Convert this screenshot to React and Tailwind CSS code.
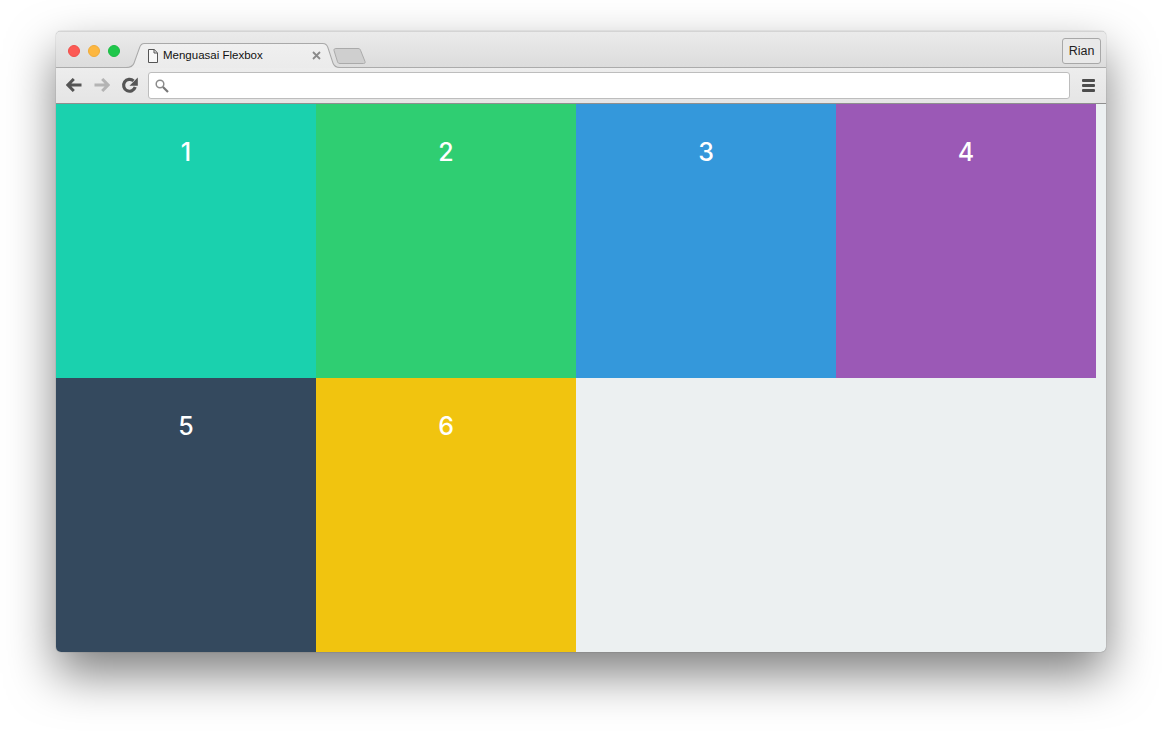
const cells = [
  { n: "1", c: "bg-[#1ad1ae]" },
  { n: "2", c: "bg-[#2fce72]" },
  { n: "3", c: "bg-[#3498db]" },
  { n: "4", c: "bg-[#9b59b6]" },
  { n: "5", c: "bg-[#34495e]" },
  { n: "6", c: "bg-[#f1c40f]" },
];

function Arrow({ color, flip }) {
  return (
    <svg width="16" height="14" viewBox="0 0 16 14" className={flip ? "-scale-x-100" : ""}>
      <path d="M7.800 1 1.900 7l5.900 6M2.200 7H15.500" fill="none" stroke={color} strokeWidth="3" />
    </svg>
  );
}

export default function App() {
  return (
    <div className="w-[1162px] h-[732px] overflow-hidden bg-white pt-[31px] pl-[56px] font-['Liberation_Sans',sans-serif]">
      <div className="w-[1050px] h-[621px] rounded-[5px] shadow-[0_0_1px_rgba(0,0,0,0.55),0_22px_48px_rgba(0,0,0,0.5)] flex flex-col overflow-hidden bg-[#ecf0f1]">
        {/* title bar */}
        <div className="h-[36px] shrink-0 flex items-end bg-gradient-to-b from-[#ebebeb] to-[#dcdcdc] border-t border-[#d4d4d4]">
          <div className="flex gap-[8px] ml-[12px] self-start mt-[13px]">
            <span className="w-[12px] h-[12px] rounded-full bg-[#fc5a55] border border-[#f04f4a]" />
            <span className="w-[12px] h-[12px] rounded-full bg-[#fdb740] border border-[#f0ab38]" />
            <span className="w-[12px] h-[12px] rounded-full bg-[#1fc74b] border border-[#1cbb45]" />
          </div>
          <div className="relative w-[214px] h-[25px] ml-[6px] -mb-px z-10 flex items-center shrink-0">
            <svg className="absolute inset-0" width="214" height="25" viewBox="0 0 212 25" preserveAspectRatio="none">
              <defs>
                <linearGradient id="tabg" x1="0" y1="0" x2="0" y2="1">
                  <stop offset="0" stopColor="#f0f0f0" />
                  <stop offset="1" stopColor="#ebebeb" />
                </linearGradient>
              </defs>
              <path d="M0 24.5C5 24.5 7 23 8 20L13.500 4.500C14.500 1.500 15.500 .5 18 .5L195 .5C198 .5 199 1.500 200 4.500L205 20C206 23 208 24.500 212 24.500V25H0Z" fill="url(#tabg)" />
              <path d="M0 24.5C5 24.5 7 23 8 20L13.500 4.500C14.500 1.500 15.500 .5 18 .5L195 .5C198 .5 199 1.500 200 4.500L205 20C206 23 208 24.500 212 24.500" fill="none" stroke="#a9a9a9" />
            </svg>
            <svg className="relative ml-[22px] shrink-0" width="10" height="14" viewBox="0 0 10 14">
              <path d="M.5.5H6.200L9.500 3.800V13.500H.5ZM6 .5V4H9.500" fill="#f8f8f8" stroke="#555" />
            </svg>
            <span className="relative ml-[5px] text-[11.500px] leading-none text-[#111] w-[140px] whitespace-nowrap">Menguasai Flexbox</span>
            <svg className="relative ml-[9px]" width="9" height="9" viewBox="0 0 9 9">
              <path d="M1 1 8 8M8 1 1 8" stroke="#8a8a8a" strokeWidth="1.800" />
            </svg>
          </div>
          <svg className="-ml-[7px] self-start mt-[16px] shrink-0" width="33" height="17" viewBox="0 0 33 17">
            <path d="M1 2.500C.8 1.200 1.500.5 2.800.5H25C26.500.5 27 1 27.500 2.200L32 13.500C32.400 15 31.800 15.500 30.500 15.500H7C5.500 15.500 5 15 4.500 13.800Z" fill="#cfcfcf" stroke="#aaaaaa" />
          </svg>
          <div className="ml-auto mr-[5px] self-start mt-[6px] w-[39px] h-[26px] rounded-[3px] border border-[#a8a8a8] bg-[#e9e9e9] flex items-center justify-center text-[12.500px] text-[#222]">
            Rian
          </div>
        </div>
        {/* toolbar */}
        <div className="h-[37px] shrink-0 flex items-center bg-gradient-to-b from-[#ededed] to-[#e5e5e5] border-t border-[#ababab] border-b-[#8f8f8f] border-b">
          <div className="flex gap-[12px] ml-[10px]">
            <Arrow color="#555555" />
            <Arrow color="#b4b4b4" flip />
            <svg className="-ml-[1px] -mt-[1px]" width="17" height="17" viewBox="0 0 16 16">
              <path d="M13.400 9.500A5.600 5.600 0 1 1 11.800 3.600" fill="none" stroke="#555555" strokeWidth="3" />
              <path d="M15.800 .4V8.200H8Z" fill="#555555" />
            </svg>
          </div>
          <div className="ml-[10px] w-[922px] h-[27px] rounded-[3px] bg-white border border-[#bdbdbd] flex items-center pl-[6px]">
            <svg width="14" height="14" viewBox="0 0 14 14">
              <circle cx="5" cy="5" r="3.800" fill="none" stroke="#8b8b8b" strokeWidth="1.500" />
              <path d="M8 8 13 13" stroke="#777777" strokeWidth="2.200" />
            </svg>
          </div>
          <div className="ml-[12px] w-[13px] flex flex-col gap-[2px]">
            <span className="h-[3px] rounded-[1px] bg-[#4d4d4d]" />
            <span className="h-[3px] rounded-[1px] bg-[#4d4d4d]" />
            <span className="h-[3px] rounded-[1px] bg-[#4d4d4d]" />
          </div>
        </div>
        {/* content */}
        <div className="flex-1 flex flex-wrap content-start pr-[10px]">
          {cells.map((c) => (
            <div key={c.n} className={`w-[260px] h-[274px] pt-[32px] text-center text-white text-[25px] leading-[32px] font-[550] font-['Inter',sans-serif] ${c.c}`}>
              {c.n}
            </div>
          ))}
        </div>
      </div>
    </div>
  );
}
